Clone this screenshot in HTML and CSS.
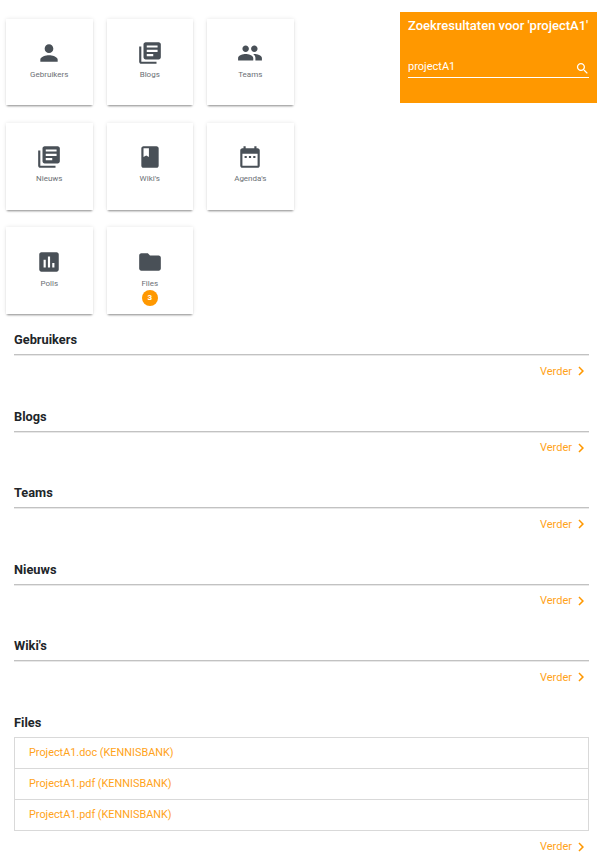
FILE: index.html
```html
<!DOCTYPE html>
<html lang="nl">
<head>
<meta charset="utf-8">
<title>Zoekresultaten</title>
<link rel="stylesheet" href="styles.css">
</head>
<body>
<div class="top">
  <div class="tiles">
    <a class="tile"><svg viewBox="0 0 24 24"><path d="M12 12c2.21 0 4-1.79 4-4s-1.79-4-4-4-4 1.79-4 4 1.79 4 4 4zm0 2c-2.67 0-8 1.34-8 4v2h16v-2c0-2.66-5.33-4-8-4z"/></svg><span>Gebruikers</span></a>
    <a class="tile"><svg viewBox="0 0 24 24"><path d="M4 6H2v14c0 1.1.9 2 2 2h14v-2H4V6zm16-4H8c-1.1 0-2 .9-2 2v12c0 1.1.9 2 2 2h12c1.1 0 2-.9 2-2V4c0-1.1-.9-2-2-2zm-1 9H9V9h10v2zm-4 4H9v-2h6v2zm4-8H9V5h10v2z"/></svg><span>Blogs</span></a>
    <a class="tile"><svg viewBox="0 0 24 24"><path d="M16 11c1.66 0 2.99-1.34 2.99-3S17.66 5 16 5c-1.66 0-3 1.34-3 3s1.34 3 3 3zm-8 0c1.66 0 2.99-1.34 2.99-3S9.66 5 8 5C6.34 5 5 6.34 5 8s1.34 3 3 3zm0 2c-2.33 0-7 1.17-7 3.5V19h14v-2.5c0-2.33-4.67-3.5-7-3.5zm8 0c-.29 0-.62.02-.97.05 1.16.84 1.97 1.97 1.97 3.45V19h6v-2.5c0-2.33-4.67-3.5-7-3.5z"/></svg><span>Teams</span></a>
    <a class="tile"><svg viewBox="0 0 24 24"><path d="M4 6H2v14c0 1.1.9 2 2 2h14v-2H4V6zm16-4H8c-1.1 0-2 .9-2 2v12c0 1.1.9 2 2 2h12c1.1 0 2-.9 2-2V4c0-1.1-.9-2-2-2zm-1 9H9V9h10v2zm-4 4H9v-2h6v2zm4-8H9V5h10v2z"/></svg><span>Nieuws</span></a>
    <a class="tile"><svg viewBox="0 0 24 24"><path d="M18 2H6c-1.1 0-2 .9-2 2v16c0 1.1.9 2 2 2h12c1.1 0 2-.9 2-2V4c0-1.1-.9-2-2-2zM6 4h5v8l-2.5-1.5L6 12V4z"/></svg><span>Wiki's</span></a>
    <a class="tile"><svg viewBox="0 0 24 24"><path d="M19 4h-1V2h-2v2H8V2H6v2H5c-1.1 0-2 .9-2 2v14c0 1.1.9 2 2 2h14c1.1 0 2-.9 2-2V6c0-1.1-.9-2-2-2zm0 16H5V9h14v11z"/><path d="M7 11h2v2H7zm4 0h2v2h-2zm4 0h2v2h-2z"/></svg><span>Agenda's</span></a>
    <a class="tile"><svg viewBox="0 0 24 24"><path d="M19 3H5c-1.1 0-2 .9-2 2v14c0 1.1.9 2 2 2h14c1.1 0 2-.9 2-2V5c0-1.1-.9-2-2-2zM9 17H7v-7h2v7zm4 0h-2V7h2v10zm4 0h-2v-4h2v4z"/></svg><span>Polls</span></a>
    <a class="tile"><svg viewBox="0 0 24 24"><path d="M10 4H4c-1.1 0-1.99.9-1.99 2L2 18c0 1.1.9 2 2 2h16c1.1 0 2-.9 2-2V8c0-1.1-.9-2-2-2h-8l-2-2z"/></svg><span>Files</span><b class="badge">3</b></a>
  </div>
  <div class="panel">
    <h1>Zoekresultaten voor 'projectA1'</h1>
    <div class="field">
      <span>projectA1</span>
      <svg viewBox="0 0 24 24"><path d="M15.5 14h-.79l-.28-.27C15.41 12.59 16 11.11 16 9.5 16 5.91 13.09 3 9.5 3S3 5.91 3 9.5 5.91 16 9.5 16c1.61 0 3.09-.59 4.23-1.57l.27.28v.79l5 4.99L20.49 19l-4.99-5zm-6 0C7.01 14 5 11.99 5 9.5S7.01 5 9.5 5 14 7.01 14 9.5 11.99 14 9.5 14z"/></svg>
    </div>
  </div>
</div>
<main class="results">
  <section class="group"><h2>Gebruikers</h2><a class="more">Verder<svg viewBox="0 0 24 24"><path d="M10 6L8.59 7.41 13.17 12l-4.58 4.59L10 18l6-6z"/></svg></a></section>
  <section class="group"><h2>Blogs</h2><a class="more">Verder<svg viewBox="0 0 24 24"><path d="M10 6L8.59 7.41 13.17 12l-4.58 4.59L10 18l6-6z"/></svg></a></section>
  <section class="group"><h2>Teams</h2><a class="more">Verder<svg viewBox="0 0 24 24"><path d="M10 6L8.59 7.41 13.17 12l-4.58 4.59L10 18l6-6z"/></svg></a></section>
  <section class="group"><h2>Nieuws</h2><a class="more">Verder<svg viewBox="0 0 24 24"><path d="M10 6L8.59 7.41 13.17 12l-4.58 4.59L10 18l6-6z"/></svg></a></section>
  <section class="group"><h2>Wiki's</h2><a class="more">Verder<svg viewBox="0 0 24 24"><path d="M10 6L8.59 7.41 13.17 12l-4.58 4.59L10 18l6-6z"/></svg></a></section>
  <section class="group">
    <h2 class="plain">Files</h2>
    <ul class="list">
      <li>ProjectA1.doc (KENNISBANK)</li>
      <li>ProjectA1.pdf (KENNISBANK)</li>
      <li>ProjectA1.pdf (KENNISBANK)</li>
    </ul>
    <a class="more">Verder<svg viewBox="0 0 24 24"><path d="M10 6L8.59 7.41 13.17 12l-4.58 4.59L10 18l6-6z"/></svg></a>
  </section>
</main>
</body>
</html>
```
FILE: styles.css
```css
* { box-sizing: border-box; }
html, body { margin: 0; padding: 0; background: #fff; }
body { font-family: Roboto, "Liberation Sans", sans-serif; color: #212529; width: 600px; height: 863px; overflow: hidden; }
.top { display: flex; justify-content: space-between; align-items: flex-start; padding: 11.5px 3px 0 6px; height: 320.3px; }
.tiles { display: grid; grid-template-columns: repeat(3, 86.5px); grid-auto-rows: 86.6px; column-gap: 14px; row-gap: 17.7px; margin-top: 7.2px; width: 288px; }
.tile { display: flex; flex-direction: column; align-items: center; padding-top: 21.5px; background: #fff; box-shadow: 0 2px 2px -1px rgba(0,0,0,.42), 0 0 4px rgba(0,0,0,.1); font-size: 8px; color: #6c7075; }
.tile svg { width: 26px; height: 26px; fill: #495057; flex: none; }
.tile span { line-height: 10px; margin-top: 4px; }
.badge { width: 16px; height: 16px; border-radius: 50%; background: #ff9800; color: #fff; font-size: 8px; font-weight: 700; line-height: 16px; text-align: center; margin-top: 1px; }
.panel { width: 197px; height: 91.5px; background: #ff9800; color: #fff; padding: 5px 8px 0; }
.panel h1 { margin: 0; font-size: 13px; line-height: 17px; font-weight: 500; white-space: nowrap; }
.field { display: flex; justify-content: space-between; align-items: center; height: 19px; margin-top: 25px; padding-bottom: 2px; border-bottom: 1px solid #fff; font-size: 11px; }
.field svg { width: 15px; height: 15px; fill: #fff; margin-top: 4px; margin-right: -1px; }
.results { padding: 0 11px 0 14px; }
.group h2 { margin: 0; font-size: 12.8px; line-height: 17px; font-weight: 700; padding-top: 11px; padding-bottom: 6px; border-bottom: 1px solid #c2c2c2; color: #212529; box-shadow: 0 1px 0 #e8e8e8; }
.group h2.plain { border-bottom: 0; box-shadow: none; padding-bottom: 6px; }
.more { display: flex; justify-content: flex-end; align-items: center; height: 22px; margin-top: 5px; margin-bottom: 14.5px; font-size: 11px; color: #ffa31a; }
.more svg { width: 18px; height: 18px; fill: #ff9800; margin-left: 0; margin-right: -1px; }
.list { list-style: none; margin: 0; padding: 0; border: 1px solid #d9d9d9; }
.list li { height: 31px; padding: 0 14px; font-size: 10.85px; line-height: 29px; color: #ffa31a; border-top: 1px solid #d9d9d9; }
.list li:first-child { border-top: 0; height: 30px; }
```
